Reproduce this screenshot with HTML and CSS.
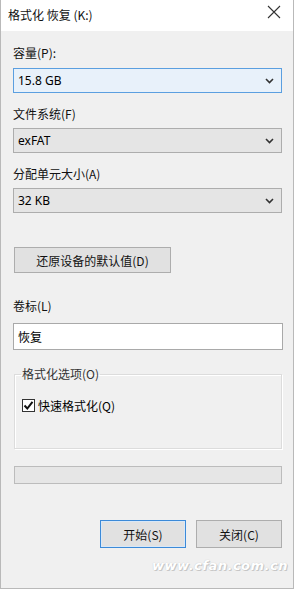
FILE: index.html
```html
<!DOCTYPE html>
<html lang="zh-CN">
<head>
<meta charset="utf-8">
<title>格式化 恢复 (K:)</title>
<link rel="stylesheet" href="styles.css">
</head>
<body>
<div class="window">
  <div class="titlebar">
    <span class="title">格式化 恢复 (K:)</span>
    <span class="close">
      <svg width="14" height="14" viewBox="0 0 14 14"><path d="M1 1 L13 13 M13 1 L1 13" stroke="#333" stroke-width="1.1" fill="none"/></svg>
    </span>
  </div>
  <div class="content">
    <div class="label l1">容量(P):</div>
    <div class="select focused"><span>15.8 GB</span><svg class="chev" width="9" height="6" viewBox="0 0 9 6"><path d="M1 1 L4.5 4.5 L8 1" stroke="#333" stroke-width="1.6" fill="none"/></svg></div>

    <div class="label l2">文件系统(F)</div>
    <div class="select"><span>exFAT</span><svg class="chev" width="9" height="6" viewBox="0 0 9 6"><path d="M1 1 L4.5 4.5 L8 1" stroke="#333" stroke-width="1.6" fill="none"/></svg></div>

    <div class="label l2">分配单元大小(A)</div>
    <div class="select"><span>32 KB</span><svg class="chev" width="9" height="6" viewBox="0 0 9 6"><path d="M1 1 L4.5 4.5 L8 1" stroke="#333" stroke-width="1.6" fill="none"/></svg></div>

    <button class="btn restore">还原设备的默认值(D)</button>

    <div class="label l4">卷标(L)</div>
    <div class="input">恢复</div>

    <fieldset class="group">
      <legend>格式化选项(O)</legend>
      <div class="check-row">
        <span class="checkbox"><svg width="11" height="11" viewBox="0 0 11 11"><path d="M1.5 5.5 L4.3 8.5 L9.5 1.8" stroke="#111" stroke-width="2" fill="none"/></svg></span>
        <span>快速格式化(Q)</span>
      </div>
    </fieldset>

    <div class="progress"></div>

    <div class="actions">
      <button class="btn default">开始(S)</button>
      <button class="btn">关闭(C)</button>
    </div>
    <div class="watermark">www.cfan.com.cn</div>
  </div>
</div>
</body>
</html>
```

FILE: styles.css
```css
html, body {
  margin: 0;
  padding: 0;
  background: #f0f0f0;
}
body {
  font-family: "Segoe UI", "Noto Sans", "Noto Sans CJK SC", sans-serif;
  font-size: 12px;
  color: #000;
}
.window {
  width: 294px;
  height: 589px;
  box-sizing: border-box;
  border-left: 1px solid #b9b9b9;
  border-right: 1px solid #b9b9b9;
  border-bottom: 1px solid #b9b9b9;
  background: #f0f0f0;
  display: flex;
  flex-direction: column;
}
.titlebar {
  height: 31px;
  background: #fff;
  display: flex;
  align-items: center;
  justify-content: space-between;
  padding-left: 7px;
  padding-right: 12px;
  flex: none;
}
.title {
  font-family: "Noto Sans CJK SC", sans-serif;
  font-size: 12px;
  color: #111;
  position: relative;
  top: -1px;
}
.close {
  display: flex;
  position: relative;
  top: -4px;
}
.content {
  padding: 0 11px 0 12px;
  display: flex;
  flex-direction: column;
  flex: 1;
}
.label {
  font-family: "Noto Sans CJK SC", sans-serif;
  height: 16px;
  line-height: 16px;
  font-size: 12px;
  color: #111;
}
.l1 { margin-top: 14px; margin-bottom: 7px; }
.l2 { margin-top: 13px; margin-bottom: 6px; }
.l4 { margin-top: 25px; margin-bottom: 9px; }
.select {
  height: 25px;
  box-sizing: border-box;
  border: 1px solid #adadad;
  background: #e5e5e5;
  display: flex;
  align-items: center;
  justify-content: space-between;
  padding: 0 7px 0 4px;
  font-size: 12px;
}
.select.focused {
  background: #e8f1fa;
  border-color: #5b9fe0;
}
.chev { flex: none; }
.btn {
  font-family: "Noto Sans CJK SC", sans-serif;
  font-size: 12px;
  color: #111;
  background: #e1e1e1;
  border: 1px solid #adadad;
  box-sizing: border-box;
  height: 28px;
  padding: 0;
}
.restore {
  margin-top: 34px;
  width: 157px;
  height: 26px;
  margin-left: 1px;
}
.input {
  font-family: "Noto Sans CJK SC", sans-serif;
  height: 27px;
  box-sizing: border-box;
  border: 1px solid #a9a9a9;
  background: #fff;
  display: flex;
  align-items: center;
  padding-left: 4px;
  margin-right: -1px;
}
.group {
  margin: 17px 0 0 1px;
  padding: 16px 0 0 7px;
  height: 82px;
  box-sizing: border-box;
  border: 1px solid #dcdcdc;
  box-shadow: inset 1px 1px 0 #fff, 1px 1px 0 #fff;
  min-width: 0;
  position: relative;
}
.group legend {
  font-family: "Noto Sans CJK SC", sans-serif;
  padding: 0 1px;
  margin-left: -1px;
  color: #333;
  line-height: 14px;
}
.check-row {
  display: flex;
  align-items: center;
  gap: 3px;
  font-family: "Noto Sans CJK SC", sans-serif;
  margin-top: 0;
}
.checkbox {
  width: 13px;
  height: 13px;
  box-sizing: border-box;
  border: 1px solid #333;
  background: #fff;
  display: flex;
  align-items: center;
  justify-content: center;
}
.progress {
  margin-top: 17px;
  height: 18px;
  box-sizing: border-box;
  border: 1px solid #bcbcbc;
  background: #e6e6e6;
  margin-left: 1px;
}
.actions {
  display: flex;
  justify-content: flex-end;
  gap: 10px;
  margin-top: 36px;
}
.actions .btn {
  width: 86px;
}
.btn.default {
  border-color: #3c8ad8;
  box-shadow: inset 0 0 0 1px #d9e8f7;
}
.watermark {
  align-self: flex-end;
  margin-top: 10px;
  margin-right: -6px;
  font-family: "DejaVu Sans", sans-serif;
  font-style: italic;
  font-weight: bold;
  font-size: 13px;
  color: #fff;
  text-shadow: 0 0 1px #bbb, 1px 1px 0 #c8c8c8;
  letter-spacing: 0.5px;
}
```
